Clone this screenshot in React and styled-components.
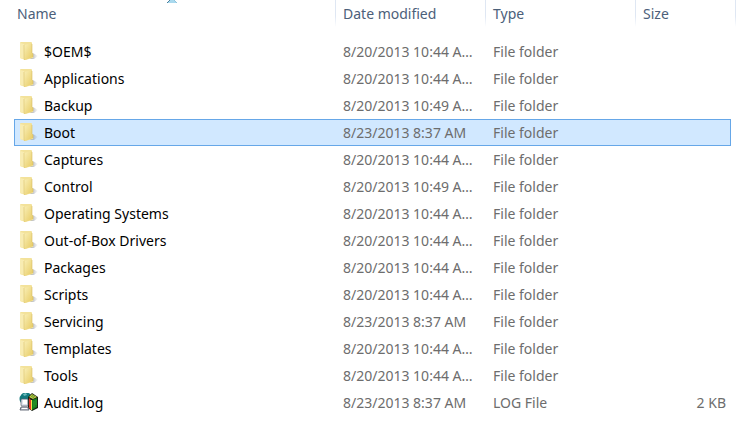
import React from 'react';
import styled, { createGlobalStyle } from 'styled-components';

const GlobalStyle = createGlobalStyle`
  body {
    margin: 0;
    background: #fff;
    font-family: 'Noto Sans', 'Open Sans', sans-serif;
    font-size: 14px;
    line-height: 20px;
  }
`;
const Listing = styled.main`
  padding: 0 7px 0 14px;
`;
const Table = styled.table`
  width: 100%;
  table-layout: fixed;
  border-collapse: separate;
  border-spacing: 0;
`;
const Col = styled.col`
  width: ${props => props.$width};
`;
const Head = styled.thead`
  &::after {
    content: '';
    display: block;
    height: 11px;
  }
`;
const Heading = styled.th`
  position: relative;
  height: 27px;
  box-sizing: border-box;
  padding: 0 0 0 ${props => (props.$first ? '3px' : '8px')};
  color: #4c607a;
  font-weight: 400;
  text-align: left;
  background: ${props => (props.$first ? 'none' : 'linear-gradient(#dfe7f3 60%, #fff) left / 1px 100% no-repeat')};
`;
const EndLine = styled.span`
  position: absolute;
  top: 0;
  right: -5px;
  width: 1px;
  height: 100%;
  background: linear-gradient(#dfe7f3 60%, #fff);
`;
const SortArrow = styled.svg`
  position: absolute;
  top: 0;
  left: 152px;
`;
const Cell = styled.td`
  height: 27px;
  box-sizing: border-box;
  padding: 0 5px 0 8px;
  color: #6d6d6d;
  text-align: ${props => (props.$right ? 'right' : 'left')};
  white-space: nowrap;
  overflow: hidden;
  text-overflow: ellipsis;
`;
const NameCell = styled(Cell)`
  padding-left: 5px;
  color: #000;
`;
const DateCell = styled(Cell)`
  padding-right: 12px;
`;
const Row = styled.tr`
  &[aria-selected='true'] td {
    background: #d1e8ff;
    border: 0 solid #66a7e8;
    border-width: 1px 0;
  }
  &[aria-selected='true'] td:first-child {
    border-left-width: 1px;
    padding-left: 4px;
  }
  &[aria-selected='true'] td:last-child {
    border-right-width: 1px;
  }
`;
const FileName = styled.div`
  display: flex;
  align-items: center;
  gap: 5px;
`;
const Icon = styled.svg`
  flex: none;
  width: 20px;
  height: 20px;
`;

const FolderIcon = () => (
  <Icon viewBox="0 0 20 20" aria-hidden="true">
    <defs>
      <linearGradient id="folder-front" x1="0" y1="0" x2="1" y2="1">
        <stop offset="0" stopColor="#faf0b9" />
        <stop offset="1" stopColor="#e6c95f" />
      </linearGradient>
      <linearGradient id="folder-shadow">
        <stop offset="0" stopColor="#7d838c" stopOpacity="0.7" />
        <stop offset="1" stopColor="#7d838c" stopOpacity="0" />
      </linearGradient>
    </defs>
    <path d="M11 17 L14 11 L19 14 L15 17 Z" fill="url(#folder-shadow)" />
    <path d="M1 1 Q1 0 2 0 H12 Q13 0 13 1 V11 L14 12 V16 L6 18 L1 16 Z" fill="#f3e29a" />
    <path d="M1 1 L5 2 V17 L1 16 Z" fill="#f8ecb2" />
    <path d="M5 3 L13 1 V11 L14 12 V15 L6 18 L5 17 Z" fill="url(#folder-front)" />
    <path d="M5 3 V17 L6 18" fill="none" stroke="#dfc876" strokeWidth="0.7" />
    <path d="M13 2 V11 L14 12 V15" fill="none" stroke="#d8bd63" strokeWidth="0.6" />
  </Icon>
);

const LogIcon = () => (
  <Icon viewBox="0 1 20 20" aria-hidden="true">
    <circle cx="7" cy="7" r="6.5" fill="#12797d" />
    <path d="M4 2 L7 1 L8 3 L5 4 Z" fill="#69b9bb" />
    <path d="M9 5 L13 1 L19 5 V16 L13 19 L9 16 Z" fill="#171f12" />
    <path d="M10 5 L13 2 L18 5 L14 7 Z" fill="#c5cf45" />
    <path d="M12 4 L15 6 M13 3 L16 5" stroke="#26721c" strokeWidth="0.6" />
    <path d="M10 6 L12 8 V18 L10 16 Z" fill="#e5392a" />
    <path d="M12 8 L13 8 V18 H12 Z" fill="#f3e04b" />
    <path d="M13 8 L18 6 V15 L13 18 Z" fill="#167e1c" />
    <path d="M15 9 V15 M17 8 V13" stroke="#3da338" strokeWidth="0.7" />
    <rect x="2" y="7" width="7" height="7" rx="1" fill="#dfe3ef" stroke="#55606f" strokeWidth="0.7" />
    <rect x="4" y="8" width="4" height="4" fill="#fff" />
    <path d="M2 15 H9 L10 18 H1 Z" fill="#c4c9d8" stroke="#4a515f" strokeWidth="0.8" />
    <path d="M3 16.5 H8" stroke="#fff" />
  </Icon>
);

const files = [
  { name: '$OEM$', date: '8/20/2013 10:44 AM' },
  { name: 'Applications', date: '8/20/2013 10:44 AM' },
  { name: 'Backup', date: '8/20/2013 10:49 AM' },
  { name: 'Boot', date: '8/23/2013 8:37 AM', selected: true },
  { name: 'Captures', date: '8/20/2013 10:44 AM' },
  { name: 'Control', date: '8/20/2013 10:49 AM' },
  { name: 'Operating Systems', date: '8/20/2013 10:44 AM' },
  { name: 'Out-of-Box Drivers', date: '8/20/2013 10:44 AM' },
  { name: 'Packages', date: '8/20/2013 10:44 AM' },
  { name: 'Scripts', date: '8/20/2013 10:44 AM' },
  { name: 'Servicing', date: '8/23/2013 8:37 AM' },
  { name: 'Templates', date: '8/20/2013 10:44 AM' },
  { name: 'Tools', date: '8/20/2013 10:44 AM' },
  { name: 'Audit.log', date: '8/23/2013 8:37 AM', type: 'LOG File', size: '2 KB' },
];

const App = () => (
  <Listing>
    <GlobalStyle />
    <Table>
      <colgroup>
        <Col $width="auto" />
        <Col $width="150px" />
        <Col $width="150px" />
        <Col $width="96px" />
      </colgroup>
      <Head>
        <tr>
          <Heading $first aria-sort="ascending">
            Name
            <SortArrow width="12" height="3" viewBox="0 0 12 3" aria-hidden="true">
              <path d="M4 0 H8 L11 3 H1 Z" fill="#a9d9ee" />
              <path d="M4 0 L1 3" fill="none" stroke="#4b7f9c" />
              <path d="M8 0 L11 3" fill="none" stroke="#8fc3dc" />
            </SortArrow>
          </Heading>
          <Heading>Date modified</Heading>
          <Heading>Type</Heading>
          <Heading>Size<EndLine /></Heading>
        </tr>
      </Head>
      <tbody>
        {files.map(file => (
          <Row key={file.name} aria-selected={!!file.selected}>
            <NameCell>
              <FileName>
                {file.type ? <LogIcon /> : <FolderIcon />}
                {file.name}
              </FileName>
            </NameCell>
            <DateCell>{file.date}</DateCell>
            <Cell>{file.type || 'File folder'}</Cell>
            <Cell $right>{file.size}</Cell>
          </Row>
        ))}
      </tbody>
    </Table>
  </Listing>
);

export default App;
